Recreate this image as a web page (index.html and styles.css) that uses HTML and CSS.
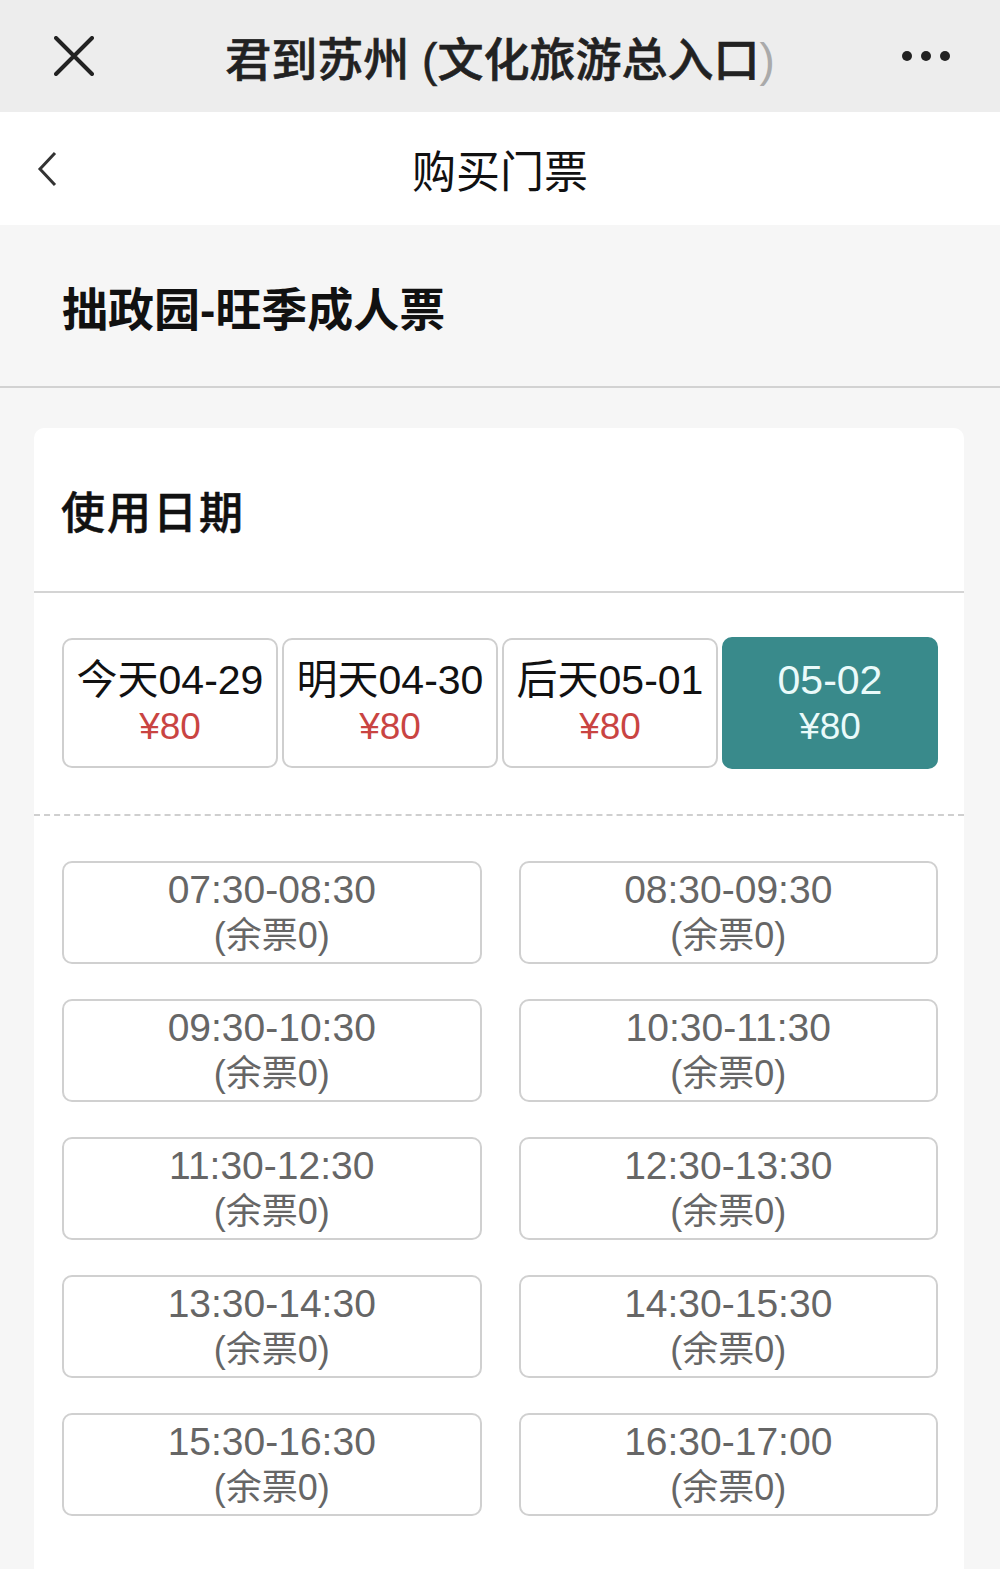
FILE: index.html
```html
<!DOCTYPE html>
<html lang="zh-CN">
<head>
    <meta charset="UTF-8">
    <meta name="viewport" content="width=device-width, initial-scale=1.0">
    <title>购买门票</title>
    <link rel="stylesheet" href="styles.css">
</head>
<body>
    <div class="top-bar">
        <svg class="close-icon" width="40" height="40" viewBox="0 0 40 40">
            <path d="M2 2 L38 38 M38 2 L2 38" stroke="#222" stroke-width="4" stroke-linecap="round" fill="none"/>
        </svg>
        <div class="app-title">君到苏州 (文化旅游总入口<span class="fade">)</span></div>
        <svg class="more-icon" width="48" height="12" viewBox="0 0 48 12">
            <circle cx="5" cy="6" r="5" fill="#222"/>
            <circle cx="24" cy="6" r="5" fill="#222"/>
            <circle cx="43" cy="6" r="5" fill="#222"/>
        </svg>
    </div>

    <div class="nav-bar">
        <svg class="back-icon" width="20" height="36" viewBox="0 0 20 36">
            <path d="M18 2 L3 18 L18 34" stroke="#333" stroke-width="3" fill="none"/>
        </svg>
        <div class="nav-title">购买门票</div>
    </div>

    <div class="ticket-name">拙政园-旺季成人票</div>

    <div class="card">
        <div class="card-title">使用日期</div>

        <div class="date-row">
            <div class="date-btn">
                <div class="date-label">今天04-29</div>
                <div class="date-price">¥80</div>
            </div>
            <div class="date-btn">
                <div class="date-label">明天04-30</div>
                <div class="date-price">¥80</div>
            </div>
            <div class="date-btn">
                <div class="date-label">后天05-01</div>
                <div class="date-price">¥80</div>
            </div>
            <div class="date-btn active">
                <div class="date-label">05-02</div>
                <div class="date-price">¥80</div>
            </div>
        </div>

        <div class="slot-grid">
            <div class="slot"><div>07:30-08:30</div><div class="left">(余票0)</div></div>
            <div class="slot"><div>08:30-09:30</div><div class="left">(余票0)</div></div>
            <div class="slot"><div>09:30-10:30</div><div class="left">(余票0)</div></div>
            <div class="slot"><div>10:30-11:30</div><div class="left">(余票0)</div></div>
            <div class="slot"><div>11:30-12:30</div><div class="left">(余票0)</div></div>
            <div class="slot"><div>12:30-13:30</div><div class="left">(余票0)</div></div>
            <div class="slot"><div>13:30-14:30</div><div class="left">(余票0)</div></div>
            <div class="slot"><div>14:30-15:30</div><div class="left">(余票0)</div></div>
            <div class="slot"><div>15:30-16:30</div><div class="left">(余票0)</div></div>
            <div class="slot"><div>16:30-17:00</div><div class="left">(余票0)</div></div>
        </div>
    </div>
</body>
</html>
```

FILE: styles.css
```css
body {
    margin: 0;
    background-color: #f6f6f6;
    font-family: "Liberation Sans", "Noto Sans CJK SC", sans-serif;
    color: #111;
    overflow: hidden;
}
.top-bar {
    height: 112px;
    background-color: #ededed;
    display: flex;
    align-items: center;
    justify-content: space-between;
    padding: 0 50px 0 54px;
}
.close-icon {
    width: 40px;
    height: 40px;
}
.app-title {
    font-size: 46px;
    font-weight: 500;
    color: #222;
    margin-left: 4px;
    -webkit-text-stroke: 0.6px #222;
}
.app-title .fade {
    color: #aaa;
    -webkit-text-stroke: 0;
}
.nav-bar {
    height: 113px;
    background-color: #fff;
    display: flex;
    align-items: center;
    position: relative;
}
.back-icon {
    margin-left: 37px;
}
.nav-title {
    position: absolute;
    left: 0;
    right: 0;
    text-align: center;
    font-size: 44px;
    color: #111;
    pointer-events: none;
}
.ticket-name {
    height: 163px;
    display: flex;
    align-items: center;
    padding: 0 0 0 62px;
    box-sizing: border-box;
    font-size: 46px;
    font-weight: bold;
    color: #111;
    border-bottom: 2px solid #d2d2d2;
}
.card {
    margin: 40px 36px 0 34px;
    background-color: #fff;
    border-radius: 10px;
    padding-bottom: 200px;
}
.card-title {
    height: 165px;
    box-sizing: border-box;
    display: flex;
    align-items: center;
    padding-left: 27px;
    font-size: 44px;
    font-weight: 500;
    letter-spacing: 2px;
    -webkit-text-stroke: 0.5px #111;
    border-bottom: 2px solid #d4d4d4;
}
.date-row {
    display: grid;
    grid-template-columns: repeat(4, 1fr);
    gap: 4px;
    padding: 45px 26px 45px 28px;
    border-bottom: 2px dashed #cfcfcf;
}
.date-btn {
    height: 130px;
    box-sizing: border-box;
    border: 2px solid #cfcfcf;
    border-radius: 10px;
    display: flex;
    flex-direction: column;
    align-items: center;
    justify-content: center;
    padding-top: 2px;
}
.date-label {
    font-size: 41px;
    line-height: 46px;
    color: #111;
    white-space: nowrap;
}
.date-price {
    font-size: 37px;
    line-height: 48px;
    color: #c94442;
}
.date-btn.active {
    background-color: #398a8b;
    border-color: #398a8b;
    margin-top: -1px;
    height: 132px;
}
.date-btn.active .date-label,
.date-btn.active .date-price {
    color: #eafafa;
}
.slot-grid {
    display: grid;
    grid-template-columns: 1fr 1fr;
    column-gap: 37px;
    row-gap: 35px;
    padding: 45px 26px 0 28px;
}
.slot {
    height: 103px;
    box-sizing: border-box;
    border: 2px solid #d0d0d0;
    border-radius: 10px;
    display: flex;
    flex-direction: column;
    align-items: center;
    justify-content: center;
    font-size: 39px;
    line-height: 46px;
    color: #666;
}
.slot .left {
    font-size: 36px;
}
```
